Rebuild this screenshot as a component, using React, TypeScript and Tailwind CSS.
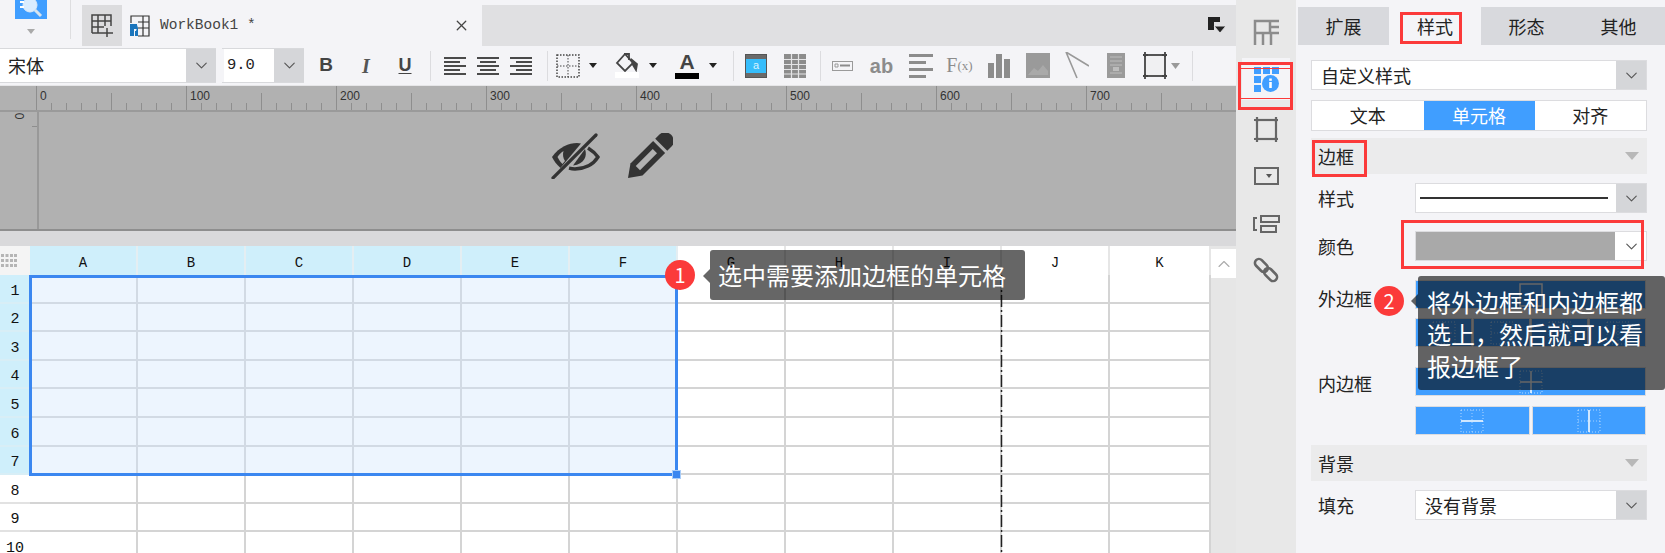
import { ChevronDown, ChevronUp, X } from 'lucide-react'

const cjk = 'font-["Noto_Sans_CJK_SC","Noto_Sans",sans-serif]'
const mono = 'font-["Liberation_Mono",monospace]'

const columns = ['A', 'B', 'C', 'D', 'E', 'F', 'G', 'H', 'I', 'J', 'K']
const rows = [1, 2, 3, 4, 5, 6, 7, 8, 9, 10]
const rulerMarks = [0, 100, 200, 300, 400, 500, 600, 700]

const Caret = () => (
  <svg width="10" height="6" viewBox="0 0 10 6">
    <path d="M1 0h8L5 5z" fill="#222" />
  </svg>
)

const Sep = () => <div className="h-[30px] w-px shrink-0 bg-[#dcdcdf]" />

const Combo = ({ label, className, labelClass }: { label: string; className: string; labelClass: string }) => (
  <div className={`flex h-[35px] items-center border-y border-[#d8d9dc] ${className}`}>
    <div className={`flex h-full min-w-0 flex-1 items-center bg-white text-[#222] ${labelClass}`}>{label}</div>
    <div className="flex h-full w-[30px] items-center justify-center bg-[#d5d6d9]">
      <ChevronDown size={19} strokeWidth={1.4} color="#555" />
    </div>
  </div>
)

const PanelSelect = ({ children }: { children: React.ReactNode }) => (
  <div className="flex h-[30px] border border-[#dcdcdf] bg-white">
    <div className={`flex min-w-0 flex-1 items-center pl-[9px] text-[18px] text-[#222] ${cjk}`}>{children}</div>
    <div className="flex w-[30px] items-center justify-center bg-[#d5d6d9]">
      <ChevronDown size={19} strokeWidth={1.4} color="#555" />
    </div>
  </div>
)

const SectionHead = ({ title }: { title: string }) => (
  <div className={`flex h-[36px] items-center justify-between bg-[#ebebec] pr-[8px] pl-[7px] text-[18px] text-[#222] ${cjk}`}>
    {title}
    <svg width="14" height="8" viewBox="0 0 14 8">
      <path d="M0 0h14L7 8z" fill="#b8b8b8" />
    </svg>
  </div>
)

type Line = 'none' | 'h' | 'v' | 'cross' | 'outline'

const DottedIcon = ({ line }: { line: Line }) => (
  <svg width="24" height="24" viewBox="0 0 24 24" fill="none">
    {line === 'outline' ? (
      <rect x="1" y="1" width="22" height="22" stroke="#fff" strokeWidth="1.500" />
    ) : (
      <rect x="1" y="1" width="22" height="22" stroke="#fff" strokeOpacity="0.6" strokeDasharray="1 2" />
    )}
    {(line === 'h' || line === 'cross') && <path d="M1 12h22" stroke="#fff" strokeWidth="1.500" />}
    {(line === 'v' || line === 'cross') && <path d="M12 1v22" stroke="#fff" strokeWidth="1.500" />}
    {(line === 'h' || line === 'none') && <path d="M12 1v22" stroke="#fff" strokeOpacity="0.5" strokeDasharray="1 2" />}
    {(line === 'v' || line === 'none') && <path d="M1 12h22" stroke="#fff" strokeOpacity="0.5" strokeDasharray="1 2" />}
  </svg>
)

const BlueBtn = ({ line }: { line: Line }) => (
  <div className="flex h-[29px] min-w-0 flex-1 items-center justify-center border border-[#dcdcdf] bg-[#409eff]">
    <DottedIcon line={line} />
  </div>
)

const AlignIcon = ({ mode }: { mode: 'left' | 'center' | 'right' }) => {
  const x = (w: number) => (mode === 'left' ? 0 : mode === 'center' ? (22 - w) / 2 : 22 - w)
  return (
    <svg width="22" height="20" viewBox="0 0 22 20" fill="#4a4a4a">
      {[22, 16, 22, 16, 22].map((w, i) => (
        <rect key={i} x={x(w)} y={1 + i * 4} width={w} height="2" />
      ))}
    </svg>
  )
}

const Ruler = () => (
  <div className="flex h-[26px] border-b-[2px] border-[#9a9a9a] pl-[36px]">
    {rulerMarks.map((mark) => (
      <div key={mark} className="relative h-full w-[150px] shrink-0 border-l border-[#8e8e8e]">
        <span className='absolute top-[4px] left-[3px] font-["Liberation_Sans",sans-serif] text-[12px] leading-none text-[#333]'>
          {mark}
        </span>
        <svg className="absolute bottom-0 left-0" width="150" height="18" stroke="#8e8e8e" fill="none">
          {[15, 30, 45, 60, 90, 105, 120, 135].map((t) => (
            <path key={t} d={`M${t - 0.5} 11v7`} />
          ))}
          <path d="M74.500 1v17" />
        </svg>
      </div>
    ))}
  </div>
)

const EyeSlash = () => (
  <svg width="49" height="46" viewBox="0 0 49 46">
    <path d="M1 24C8 14 18 10 26 10l4 .5L9.500 35C6 32 3 28 1 24z" fill="#333" />
    <path d="M6.500 24c1.500-2.500 3.500-4.500 6-6-1 3.500-.5 7 1.500 10l-2.500 3c-2-2-3.800-4.500-5-7z" fill="#b1b1b1" />
    <path d="M37 15c4 2.500 7.500 5.500 10 9-5 8-14 12-23 12-2 0-4-.3-6-.8" fill="none" stroke="#333" strokeWidth="3.400" />
    <path d="M34 16c2.500 7-.5 15-12 16.500z" fill="#333" />
    <path d="M2 45L45 2" stroke="#333" strokeWidth="3.200" strokeLinecap="round" />
  </svg>
)

const Pencil = () => (
  <svg width="46" height="46" viewBox="0 0 46 46">
    <g transform="translate(1 45) rotate(45)">
      <path d="M0 0L-8.500-12V-44H8.500V-12z" fill="#333" />
      <rect x="-3" y="-38" width="6" height="24" fill="#b1b1b1" />
      <path d="M-8.500-47H8.500V-53a8.500 8 0 0 0-17 0z" fill="#333" />
    </g>
  </svg>
)

const App = () => {
  return (
    <div className={`relative flex h-[553px] w-[1665px] overflow-hidden bg-[#f4f4f7] ${cjk}`}>
      {/* left column: tabs, toolbar, report header, sheet */}
      <div className="flex w-[1236px] shrink-0 flex-col">
        <div className="flex h-[46px] shrink-0">
          <div className="flex w-[82px] shrink-0">
            <div className="ml-[15px] flex w-[32px] flex-col items-center">
              <div className="flex h-[19px] w-[32px] items-start justify-center bg-[#409eff]">
                <svg width="28" height="19" viewBox="0 0 28 19" fill="none">
                  <circle cx="13" cy="5" r="7" fill="#fff" fillOpacity="0.8" stroke="#dbe9f7" />
                  <path d="M18 10l6 6" stroke="#d8e4ee" strokeWidth="3" />
                  <path d="M3 2h4M3 7h4" stroke="#fff" strokeWidth="2" />
                </svg>
              </div>
              <svg className="mt-[10px]" width="10" height="6" viewBox="0 0 10 6">
                <path d="M1 0h8L5 5z" fill="#aaa" />
              </svg>
            </div>
            <div className="ml-[23px] h-[39px] w-px bg-[#dedee0]" />
          </div>
          <div className="mt-[5px] flex flex-1 items-stretch bg-[#e0e0e2]">
            <div className="flex w-[40px] items-center justify-center bg-[#dcdcde]">
              <svg width="22" height="24" viewBox="0 0 22 24" fill="none" stroke="#444" strokeWidth="1.500">
                <path d="M1 19V1h19v11M1 7h19M1 13h12M7 1v18h5M14 1v11M1 19h6" />
                <path d="M16 14v9M12 19h10" />
              </svg>
            </div>
            <div className="flex w-[360px] items-center bg-[#f4f4f7] pr-[12px] pl-[8px]">
              <svg width="20" height="22" viewBox="0 0 20 22" fill="none">
                <path d="M8 1h11v20H8M13 1v20M8 7h11M8 13h11M1 8V1h7" stroke="#333" strokeWidth="1.200" />
                <path d="M0 9h7v5H4v7H0z" fill="#1b75bc" />
                <path d="M8 10v11H5v-5h1z" fill="#1b75bc" />
              </svg>
              <span className={`ml-[10px] text-[14.500px] whitespace-pre text-[#444] ${mono}`}>WorkBook1 *</span>
              <X className="ml-auto" size={17} strokeWidth={1.800} color="#444" />
            </div>
            <div className="flex flex-1 items-center justify-end pr-[10px]">
              <svg width="18" height="18" viewBox="0 0 18 18">
                <path d="M0 0h12v5H6v8H0z" fill="#222" />
                <path d="M6 9h12l-6 7z" fill="#222" stroke="#e0e0e2" strokeWidth="1" />
              </svg>
            </div>
          </div>
        </div>

        <div className="flex h-[39px] shrink-0 items-center">
          <Combo label="宋体" className="w-[216px]" labelClass={`pl-2 text-[18px] ${cjk}`} />
          <Combo label="9.0" className="ml-[6px] w-[82px] pl-[2px]" labelClass={`pl-[3px] text-[15.500px] ${mono}`} />
          <div className='ml-[2px] flex w-[40px] justify-center font-["Liberation_Sans",sans-serif] text-[19px] font-bold text-[#444]'>B</div>
          <div className='flex w-[40px] justify-center font-["Liberation_Serif",serif] text-[20px] font-bold text-[#555] italic'>I</div>
          <div className='flex w-[38px] justify-center font-["Liberation_Sans",sans-serif] text-[18px] font-bold text-[#444] underline underline-offset-2'>U</div>
          <div className="ml-[6px]"><Sep /></div>
          <div className="ml-[7px] flex w-[33px] justify-center"><AlignIcon mode="left" /></div>
          <div className="flex w-[33px] justify-center"><AlignIcon mode="center" /></div>
          <div className="flex w-[33px] justify-center"><AlignIcon mode="right" /></div>
          <div className="ml-[10px]"><Sep /></div>
          <svg className="ml-[8px]" width="24" height="24" viewBox="0 0 24 24" fill="none" stroke="#444" strokeDasharray="1.500 1.500">
            <rect x="1" y="1" width="22" height="22" strokeWidth="1.500" />
            <path d="M1 12h22M12 1v22" />
          </svg>
          <div className="ml-[8px]"><Caret /></div>
          <div className="ml-[17px] flex w-[24px] flex-col items-center">
            <svg width="24" height="20" viewBox="0 0 24 20" fill="none" stroke="#444" strokeWidth="1.800">
              <path d="M10 1l-8 9 8 8 8-8z" />
              <path d="M9 1h5v6" />
              <path d="M17 7l5 4-1 6-3-5z" fill="#444" />
            </svg>
            <div className="mt-[-1px] h-[6px] w-[24px] bg-white" />
          </div>
          <div className="ml-[9px]"><Caret /></div>
          <div className="ml-[17px] flex w-[24px] flex-col items-center">
            <span className='font-["Liberation_Sans",sans-serif] text-[21px] leading-[20px] font-bold text-[#444]'>A</span>
            <div className="mt-[1px] h-[6px] w-[24px] bg-black" />
          </div>
          <div className="ml-[9px]"><Caret /></div>
          <div className="ml-[15px]"><Sep /></div>
          <div className="ml-[11px] flex h-[24px] w-[22px] flex-col border border-[#555] bg-[#36bdfb]">
            <div className="h-[4px] bg-[#6a6a6a]" />
            <div className='flex flex-1 items-center justify-center font-["Liberation_Sans",sans-serif] text-[11px] leading-none text-[#d9f3ff]'>a</div>
            <div className="h-[4px] bg-[#6a6a6a]" />
          </div>
          <svg className="ml-[17px]" width="22" height="24" viewBox="0 0 22 24">
            <rect width="22" height="24" fill="#8c8c8c" />
            <path d="M0 5.500h22M0 10.500h22M0 15.500h22M0 20h22M7.500 0v24M14.500 0v24" stroke="#e4e4e6" strokeWidth="1.200" />
          </svg>
          <div className="ml-[14px]"><Sep /></div>
          <div className="ml-[2px] flex w-[39px] justify-center">
            <svg width="21" height="10" viewBox="0 0 21 10" fill="none">
              <rect x=".5" y=".5" width="20" height="9" stroke="#9a9a9a" />
              <path d="M3 3h3v3H3z" stroke="#9a9a9a" />
              <path d="M8 4.500h10" stroke="#8c8c8c" strokeWidth="2" />
            </svg>
          </div>
          <div className='flex w-[39px] justify-center font-["Liberation_Sans",sans-serif] text-[20px] font-bold text-[#8c8c8c]'>ab</div>
          <div className="flex w-[39px] justify-center">
            <svg width="24" height="25" viewBox="0 0 24 25" fill="#8c8c8c">
              <rect y="1" width="24" height="3" />
              <rect y="8" width="17" height="3" />
              <rect y="15" width="24" height="3" />
              <rect y="22" width="17" height="3" />
            </svg>
          </div>
          <div className='flex w-[39px] justify-center font-["Liberation_Serif",serif] text-[20px] text-[#8c8c8c]'>
            F<span className="text-[13px] leading-[32px]">(x)</span>
          </div>
          <div className="flex w-[39px] justify-center">
            <svg width="22" height="25" viewBox="0 0 22 25" fill="#8c8c8c">
              <rect y="10" width="6" height="15" />
              <rect x="8" y="1" width="6" height="24" />
              <rect x="16" y="6" width="6" height="19" />
            </svg>
          </div>
          <div className="flex w-[39px] justify-center">
            <svg width="24" height="25" viewBox="0 0 24 25">
              <rect width="24" height="25" fill="#9a9a9a" />
              <path d="M2 22l6-7 4 3 5-6 5 6v4z" fill="#a9a9a9" />
            </svg>
          </div>
          <div className="flex w-[39px] justify-center">
            <svg width="24" height="27" viewBox="0 0 24 27" fill="none" stroke="#999" strokeWidth="1.600">
              <path d="M1 0l11 26M1 0l23 14" />
            </svg>
          </div>
          <div className="flex w-[39px] justify-center">
            <svg width="18" height="25" viewBox="0 0 18 25">
              <rect width="18" height="25" fill="#9a9a9a" />
              <path d="M3 4h12M3 8h12M3 12h12M3 20h12" stroke="#bdbdbd" />
              <rect x="6" y="14" width="6" height="4" fill="#bdbdbd" />
            </svg>
          </div>
          <div className="flex w-[39px] justify-center">
            <svg width="24" height="27" viewBox="0 0 24 27" fill="none" stroke="#444" strokeWidth="1.800">
              <rect x="2" y="3" width="20" height="21" fill="#f0f0f2" />
              <path d="M2 0v5M0 3h5M22 0v5M19 3h5M2 22v5M0 24h5M22 22v5M19 24h5" />
            </svg>
          </div>
          <svg className="ml-[-3px]" width="9" height="6" viewBox="0 0 9 6">
            <path d="M0 0h9L4.500 6z" fill="#999" />
          </svg>
          <div className="ml-[12px]"><Sep /></div>
        </div>

        {/* report header block */}
        <div className="flex h-[146px] shrink-0 flex-col border-t border-[#e6e6e8] bg-[#b1b1b1]">
          <Ruler />
          <div className="flex flex-1 border-b-[2px] border-[#8e8e8e]">
            <div className="relative w-[39px] shrink-0 border-r-[2px] border-[#999]">
              <span className='absolute top-[-2px] left-[16px] rotate-90 font-["Liberation_Sans",sans-serif] text-[12px] leading-none text-[#333]'>0</span>
              <div className="absolute top-[14px] right-0 h-px w-[5px] bg-[#8e8e8e]" />
            </div>
            <div className="flex flex-1 items-center justify-center gap-[27px] pr-[51px] pb-[30px]">
              <EyeSlash />
              <Pencil />
            </div>
          </div>
        </div>

        <div className="h-[15px] shrink-0 bg-[#d9d9db]" />

        {/* sheet */}
        <div className="flex min-h-0 flex-1">
          <div className="relative min-h-0 w-[1211px] shrink-0 overflow-hidden bg-white">
            <div className="grid grid-cols-[30px_repeat(10,108px)_101px] grid-rows-[29px_repeat(10,28.600px)]">
              <div className="flex items-center justify-start bg-[#f4f4f4] pl-px">
                <svg width="16" height="13" viewBox="0 0 16 13" fill="#b5b5b5">
                  {[0, 5, 10].flatMap((y) =>
                    [0, 4.500, 9, 13].map((x) => <rect key={`${x}-${y}`} x={x} y={y} width="3" height="3" />),
                  )}
                </svg>
              </div>
              {columns.map((col, i) => (
                <div
                  key={col}
                  className={`flex items-center justify-center border-r-2 pt-[6px] text-[14px] text-[#111] ${mono} ${
                    i < 6 ? 'border-[#e4eef2] bg-[#cfeffb]' : 'border-[#e6e6e6] bg-white'
                  }`}
                >
                  {col}
                </div>
              ))}
              {rows.map((row) => (
                <div key={row} className="contents">
                  <div
                    className={`flex items-center justify-center border-b-2 pt-[7px] text-[15px] text-[#111] ${mono} ${
                      row <= 7 ? 'border-[#d8eef6] bg-[#cfeffb]' : 'border-[#e2e2e2] bg-white'
                    }`}
                  >
                    {row}
                  </div>
                  {columns.map((col, i) => (
                    <div
                      key={col}
                      className={`border-r-2 border-b-2 ${
                        row <= 7 && i < 6 ? 'border-[#d2dae4] bg-[#edf5fe]' : 'border-[#d4d4d4] bg-white'
                      }`}
                    />
                  ))}
                </div>
              ))}
            </div>
            {/* selection frame */}
            <div className="absolute top-[29px] left-[29px] h-[201px] w-[649px] border-[3px] border-[#3b87f0]">
              <div className="absolute right-[-5px] bottom-[-5px] h-[7px] w-[7px] bg-[#3b87f0] outline outline-1 outline-[#a9cdf9]" />
            </div>
            {/* page break */}
            <svg className="absolute top-[29px] left-[1000px]" width="3" height="280" stroke="#222" strokeWidth="1.500">
              <path d="M1.500 0v280" strokeDasharray="12 3 2 3" />
            </svg>
          </div>
          <div className="flex flex-1 flex-col bg-[#e6e6e6]">
            <div className="mt-[3px] flex h-[29px] items-center justify-center bg-white">
              <ChevronUp size={20} strokeWidth={1.300} color="#aaa" />
            </div>
          </div>
        </div>
      </div>

      {/* icon rail */}
      <div className="flex w-[60px] shrink-0 flex-col items-center bg-[#e8e8e8]">
        <div className="flex h-[58px] w-full items-center justify-center pt-[6px]">
          <svg width="26" height="26" viewBox="0 0 26 26" fill="none" stroke="#8c8c8c" strokeWidth="2.500">
            <path d="M26 2H2v24M2 14h24M10 14v12M18 14v12M17 2v12M17 8h9" />
          </svg>
        </div>
        <div className="flex h-[42px] w-[48px] items-center justify-center bg-[#f4f4f7]">
          <svg width="25" height="25" viewBox="0 0 25 25">
            <g fill="#409eff">
              <rect width="7" height="7" />
              <rect x="9" width="7" height="7" />
              <rect x="18" width="7" height="7" />
              <rect y="9" width="7" height="7" />
              <rect y="18" width="7" height="7" />
              <circle cx="16.500" cy="16.500" r="8.500" />
            </g>
            <rect x="15.200" y="15" width="2.600" height="6" fill="#fff" />
            <rect x="15.200" y="11.500" width="2.600" height="2.300" fill="#fff" />
          </svg>
        </div>
        <div className="flex h-[54px] items-center justify-center pt-[4px]">
          <svg width="25" height="25" viewBox="0 0 25 25" fill="none" stroke="#666" strokeWidth="2.200">
            <rect x="3" y="3" width="19" height="19" />
            <path d="M3 0v5M0 3h5M22 0v5M19 3h5M3 20v5M0 22h5M22 20v5M19 22h5" />
          </svg>
        </div>
        <div className="flex h-[42px] items-center justify-center pt-[2px]">
          <svg width="25" height="18" viewBox="0 0 25 18">
            <rect x="1" y="1" width="23" height="16" fill="none" stroke="#666" strokeWidth="2" />
            <path d="M12 7h6l-3 4z" fill="#555" />
          </svg>
        </div>
        <div className="flex h-[50px] items-center justify-center pt-[6px]">
          <svg width="27" height="18" viewBox="0 0 27 18" fill="none" stroke="#666" strokeWidth="2">
            <rect x="8" y="1" width="18" height="6" />
            <rect x="8" y="11" width="15" height="6" />
            <path d="M4 3H1v12h3" />
          </svg>
        </div>
        <div className="flex h-[48px] items-center justify-center">
          <svg width="26" height="26" viewBox="0 0 26 26" fill="none" stroke="#666" strokeWidth="2.600">
            <g transform="rotate(45 13 13)">
              <rect x="-1" y="9" width="15" height="8" rx="4" />
              <rect x="12" y="9" width="15" height="8" rx="4" />
            </g>
          </svg>
        </div>
      </div>

      {/* property panel */}
      <div className={`flex w-[369px] shrink-0 flex-col pr-[18px] pl-[15px] text-[#222] ${cjk}`}>
        <div className="mt-[7px] mr-[-18px] ml-[-13px] flex h-[38px] bg-[#d8d9dd] text-[18px]">
          <div className="flex w-[91px] items-center justify-center">扩展</div>
          <div className="flex w-[92px] items-center justify-center bg-[#f4f4f7]">样式</div>
          <div className="flex w-[91px] items-center justify-center">形态</div>
          <div className="flex flex-1 items-center justify-center">其他</div>
        </div>
        <div className="mt-[15px]">
          <PanelSelect>自定义样式</PanelSelect>
        </div>
        <div className="mt-[10px] flex h-[31px] border border-[#dcdcdf] bg-white text-[18px]">
          <div className="flex flex-1 items-center justify-center">文本</div>
          <div className="flex w-[111px] items-center justify-center bg-[#409eff] text-white">单元格</div>
          <div className="flex flex-1 items-center justify-center">对齐</div>
        </div>
        <div className="mt-[7px]">
          <SectionHead title="边框" />
        </div>
        <div className="mt-[9px] flex items-center">
          <div className="w-[104px] pl-[7px] text-[18px]">样式</div>
          <div className="flex-1">
            <PanelSelect>
              <div className="h-[2px] w-[188px] translate-x-[-5px] bg-[#333]" />
            </PanelSelect>
          </div>
        </div>
        <div className="mt-[18px] flex items-center">
          <div className="w-[104px] pl-[7px] text-[18px]">颜色</div>
          <div className="flex h-[30px] flex-1 border border-[#dcdcdf] bg-white">
            <div className="flex-1 bg-[#a9a9a9]" />
            <div className="ml-[2px] flex w-[29px] items-center justify-center">
              <ChevronDown size={19} strokeWidth={1.400} color="#555" />
            </div>
          </div>
        </div>
        <div className="mt-[19px] flex">
          <div className="w-[104px] pt-[5px] pl-[7px] text-[18px]">外边框</div>
          <div className="flex w-[231px] flex-col">
            <div className="flex">
              <BlueBtn line="outline" />
            </div>
            <div className="mt-[9px] flex gap-[1px]">
              <BlueBtn line="none" />
              <BlueBtn line="none" />
              <BlueBtn line="none" />
              <BlueBtn line="none" />
            </div>
          </div>
        </div>
        <div className="mt-[20px] flex">
          <div className="w-[104px] pt-[3px] pl-[7px] text-[18px]">内边框</div>
          <div className="flex w-[231px] flex-col">
            <div className="flex">
              <BlueBtn line="cross" />
            </div>
            <div className="mt-[10px] flex gap-[2px]">
              <BlueBtn line="h" />
              <BlueBtn line="v" />
            </div>
          </div>
        </div>
        <div className="mt-[10px]">
          <SectionHead title="背景" />
        </div>
        <div className="mt-[9px] flex items-center">
          <div className="w-[104px] pl-[7px] text-[18px]">填充</div>
          <div className="flex-1">
            <PanelSelect>没有背景</PanelSelect>
          </div>
        </div>
      </div>

      {/* annotation frames */}
      <div className="absolute top-[12px] left-[1400px] h-[32px] w-[62px] border-[3px] border-[#fb3a3a]" />
      <div className="absolute top-[62px] left-[1238px] h-[48px] w-[55px] border-[3px] border-[#fb3a3a]">
        <div className="mt-[3px] h-px bg-[#fb3a3a]" />
        <div className="mt-[29px] h-px bg-[#fb3a3a]" />
      </div>
      <div className="absolute top-[140px] left-[1312px] h-[37px] w-[55px] border-[3px] border-[#fb3a3a]" />
      <div className="absolute top-[220px] left-[1401px] h-[49px] w-[243px] border-[3px] border-[#fb3a3a]" />

      {/* callout 1 */}
      <div className="absolute top-[260px] left-[665px] flex h-[30px] w-[30px] items-center justify-center rounded-full bg-[#fb3a3a] text-[20px] text-white">
        1
      </div>
      <div className="absolute top-[269px] left-[703px] h-0 w-0 border-y-[7px] border-r-[7px] border-y-transparent border-r-black/60" />
      <div className="absolute top-[250px] left-[710px] flex h-[50px] w-[315px] items-center rounded-[3px] bg-black/60 pl-[8px] text-[24px] text-white">
        选中需要添加边框的单元格
      </div>

      {/* callout 2 */}
      <div className="absolute top-[286px] left-[1374px] flex h-[30px] w-[30px] items-center justify-center rounded-full bg-[#fb3a3a] text-[20px] text-white">
        2
      </div>
      <div className="absolute top-[294px] left-[1411px] h-0 w-0 border-y-[7px] border-r-[7px] border-y-transparent border-r-black/60" />
      <div className="absolute top-[276px] left-[1418px] h-[114px] w-[247px] rounded-[3px] bg-black/60 pt-[10px] pl-[9px] text-[24px] leading-[32px] text-white">
        将外边框和内边框都
        <br />
        选上，然后就可以看
        <br />
        报边框了
      </div>
    </div>
  )
}

export default App
